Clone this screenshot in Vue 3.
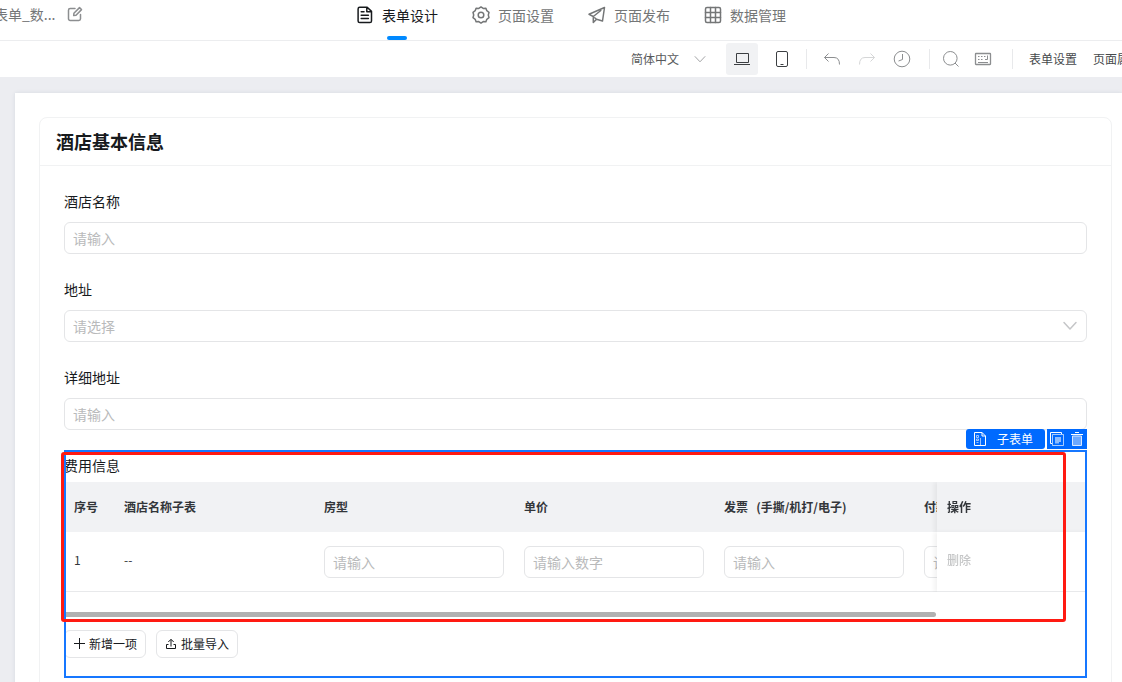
<script setup>
import { ref } from 'vue'

const tabs = [
  { id: 'design', label: '表单设计' },
  { id: 'settings', label: '页面设置' },
  { id: 'publish', label: '页面发布' },
  { id: 'data', label: '数据管理' },
]
const activeTab = ref('design')
const language = ref('zh')
const address = ref('')
const columns = [
  { key: 'room', title: '房型', hint: '请输入' },
  { key: 'price', title: '单价', hint: '请输入数字' },
  { key: 'invoice', title: '发票\u00a0\u00a0\u00a0(手撕/机打/电子)', hint: '请输入' },
  { key: 'pay', title: '付款', hint: '请输入' },
]
</script>

<template>
  <div class="designer">
    <header class="topbar">
      <div class="brand">
        <span class="brand-name">表单_数...</span>
        <button class="icon-btn" aria-label="重命名">
          <svg width="16" height="16" viewBox="0 0 16 16" class="line gray"><path d="M8 2.5H3.2a1.7 1.7 0 0 0-1.7 1.7v8.6a1.7 1.7 0 0 0 1.7 1.7h8.6a1.7 1.7 0 0 0 1.7-1.7V8.5M6.7 9.6l.2-2.4 5.6-5.6 2 2L9 9.2z" /></svg>
        </button>
      </div>
      <nav class="tabs">
        <button
          v-for="t in tabs"
          :key="t.id"
          class="tab"
          :class="{ active: activeTab === t.id }"
          @click="activeTab = t.id"
        >
          <svg v-if="t.id === 'design'" width="18" height="18" viewBox="0 0 18 18" class="line"><path d="M11.2 1.3H3.7A1.6 1.6 0 0 0 2.1 2.9v12a1.6 1.6 0 0 0 1.6 1.6h10.2a1.6 1.6 0 0 0 1.6-1.600V5.400zM10.800 1.600v4.100h4.400M5.200 5.800h2.800M5.200 9.200h7.200M5.200 12.600h7.200" /></svg>
          <svg v-else-if="t.id === 'settings'" width="18" height="18" viewBox="0 0 18 18" class="line"><path d="M9 .9l2.200 1.500 2.700-.2.900 2.500 2.200 1.600L16.300 9l.7 2.700-2.200 1.600-.9 2.500-2.700-.2L9 17.100l-2.200-1.500-2.700.2-.9-2.500L1 11.700 1.700 9 1 6.300l2.200-1.600.9-2.500 2.700.2z" /><circle cx="9" cy="9" r="2.800" /></svg>
          <svg v-else-if="t.id === 'publish'" width="18" height="18" viewBox="0 0 18 18" class="line"><path d="M16.500 1.500L1 8.300l4.300 2.200v6l3.200-3.200 6 1.700zM5.300 10.500l7.500-6M8.500 13.300l-1.800-1.600" /></svg>
          <svg v-else width="18" height="18" viewBox="0 0 18 18" class="line"><rect x="1.500" y="1.500" width="15" height="15" rx="1.500" /><path d="M6.500 1.500v15M11.500 1.500v15M1.500 6.500h15M1.500 11.500h15" /></svg>
          <span>{{ t.label }}</span>
        </button>
      </nav>
    </header>

    <div class="toolbar">
      <div class="select-box lang">
        <select v-model="language" aria-label="语言">
          <option value="zh">简体中文</option>
        </select>
        <svg width="12" height="12" viewBox="0 0 12 12" class="thin chevron"><path d="M.8 3.300L6 8.800l5.200-5.500" /></svg>
      </div>
      <div class="devices">
        <button class="device on" aria-label="电脑">
          <svg width="18" height="18" viewBox="0 0 18 18" class="thin dark"><path d="M3.500 3.500h12v9h-12zM1 14.500h16" /></svg>
        </button>
        <button class="device" aria-label="手机">
          <svg width="18" height="18" viewBox="0 0 18 18" class="thin dark"><rect x="3.500" y="1.500" width="11" height="15" rx="1.500" /><path d="M7.500 14.500h3" /></svg>
        </button>
      </div>
      <div class="group history">
        <button class="icon-btn" aria-label="撤销">
          <svg width="18" height="18" viewBox="0 0 18 18" class="thin gray"><path d="M5.500 3.500L1.500 7.500l4 4M1.500 7.500h9.500q5.500 0 5.500 7" /></svg>
        </button>
        <button class="icon-btn" aria-label="重做" disabled>
          <svg width="18" height="18" viewBox="0 0 18 18" class="thin faint"><path d="M12.500 3.500l4 4-4 4M16.500 7.500H7q-5.500 0-5.500 7" /></svg>
        </button>
        <button class="icon-btn" aria-label="历史">
          <svg width="18" height="18" viewBox="0 0 18 18" class="thin gray"><circle cx="9" cy="9" r="7.800" /><path d="M9.500 4v5.500L5.500 11" /></svg>
        </button>
      </div>
      <div class="group find">
        <button class="icon-btn" aria-label="搜索">
          <svg width="18" height="18" viewBox="0 0 18 18" class="thin gray"><circle cx="8.300" cy="8.300" r="6.800" /><path d="M13 13l3.500 3.500" /></svg>
        </button>
        <button class="icon-btn" aria-label="快捷键">
          <svg width="18" height="18" viewBox="0 0 18 18" class="thin gray"><rect x="1.500" y="3.500" width="15" height="11" rx=".5" stroke-width="1.300" /><path d="M4 6.500h8M4 9.500h6" stroke-dasharray="1.500 1.500" /><path d="M13.500 5.500v4H11M4 12.500h10" /></svg>
        </button>
      </div>
      <div class="group links">
        <button class="text-btn">表单设置</button>
        <button class="text-btn">页面属性</button>
      </div>
    </div>

    <main class="workspace">
      <div class="canvas">
        <section class="card">
          <h2 class="card-title">酒店基本信息</h2>
          <div class="card-body">
            <div class="field">
              <label for="hotel">酒店名称</label>
              <input id="hotel" type="text" class="control" placeholder="请输入" />
            </div>
            <div class="field">
              <label for="address">地址</label>
              <div class="select-box">
                <select id="address" v-model="address" class="control">
                  <option value="">请选择</option>
                </select>
                <svg width="16" height="16" viewBox="0 0 16 16" class="line chevron"><path d="M2 4.500l6 6.500 6-6.500" /></svg>
              </div>
            </div>
            <div class="field">
              <label for="detail">详细地址</label>
              <input id="detail" type="text" class="control" placeholder="请输入" />
            </div>

            <div class="subform">
              <h3 class="subform-title">费用信息</h3>
              <div class="table-wrap">
                <table>
                  <colgroup>
                    <col class="c-index" />
                    <col class="c-data" />
                    <col v-for="c in columns" :key="c.key" class="c-data" />
                    <col class="c-action" />
                  </colgroup>
                  <thead>
                    <tr>
                      <th>序号</th>
                      <th>酒店名称子表</th>
                      <th v-for="c in columns" :key="c.key">{{ c.title }}</th>
                      <th class="pinned">操作</th>
                    </tr>
                  </thead>
                  <tbody>
                    <tr>
                      <td class="text-cell">1</td>
                      <td class="text-cell">--</td>
                      <td v-for="c in columns" :key="c.key">
                        <input type="text" class="control" :placeholder="c.hint" :aria-label="c.title" />
                      </td>
                      <td class="text-cell pinned"><button class="delete" disabled>删除</button></td>
                    </tr>
                  </tbody>
                </table>
              </div>
              <div class="scrollbar"><div class="thumb"></div></div>
              <div class="actions">
                <button class="action">
                  <svg width="12" height="12" viewBox="0 0 12 12" class="thin"><path d="M6.500 0v11M1 5.500h11" /></svg>
                  <span>新增一项</span>
                </button>
                <button class="action">
                  <svg width="12" height="12" viewBox="0 0 12 12" class="thin"><path d="M6 8.500V1.500M3.300 4L6 1.300 8.700 4M3.500 6.500h-2v4h9v-4h-2" /></svg>
                  <span>批量导入</span>
                </button>
              </div>

              <div class="outline"></div>
              <div class="highlight"></div>
              <div class="badge">
                <span class="badge-name">
                  <svg width="14" height="14" viewBox="0 0 14 14" class="thin"><path d="M9 .5H1.500v13h11V4zM9 .5V4h3.500" /><path d="M3.500 3.500h2v2h-2zM3.500 7h2v1.500h-2zM3.500 10.500h2M7.500 6v7" opacity=".6" /></svg>
                  <span>子表单</span>
                </span>
                <span class="badge-tools">
                  <button class="icon-btn" aria-label="复制">
                    <svg width="14" height="14" viewBox="0 0 14 14" class="thin"><path d="M11.500 2V.5h-11v11H2" /><path d="M2.500 2.500h11v11h-11z" opacity=".65" /><path d="M5 5h6v5H9v1.500H5z" fill="currentColor" stroke="none" opacity=".55" /></svg>
                  </button>
                  <button class="icon-btn" aria-label="删除子表单">
                    <svg width="14" height="14" viewBox="0 0 14 14" class="thin"><path d="M1 2.500h12M5 .5h4" /><path d="M2.500 4h9v9.500h-9z" fill="currentColor" fill-opacity=".5" opacity=".85" /></svg>
                  </button>
                </span>
              </div>
            </div>
          </div>
        </section>
      </div>
    </main>
  </div>
</template>

<style>
body {
  margin: 0;
}
</style>

<style scoped>
.designer {
  height: 100vh;
  display: flex;
  flex-direction: column;
  overflow: hidden;
  background: #ecedf1;
  color: #171a1d;
  font-family: "Noto Sans CJK SC", "Liberation Sans", sans-serif;
  font-size: 14px;
  line-height: 22px;
}
.designer * {
  box-sizing: border-box;
}
button,
input,
select {
  font: inherit;
  color: inherit;
}
button {
  padding: 0;
  border: 0;
  background: none;
  white-space: nowrap;
}
svg {
  display: block;
  flex: none;
  fill: none;
  stroke: currentColor;
}
.line {
  stroke-width: 1.5;
  stroke-linejoin: round;
  stroke-linecap: round;
}
.thin {
  stroke-width: 1;
}
.gray {
  color: #8c8e90;
}
.dark {
  color: #3c3f42;
}
.faint {
  color: #d5d6d7;
}
.topbar {
  flex: none;
  display: grid;
  grid-template-columns: 1fr auto 1fr;
  padding-left: 20px;
  background: #fff;
  border-bottom: 1px solid #ecedef;
}
.brand {
  display: flex;
  align-items: center;
  gap: 11px;
  height: 28px;
  margin-left: -26px;
  color: #747677;
}
.tabs {
  display: flex;
  gap: 34px;
}
.tab {
  position: relative;
  display: flex;
  align-items: center;
  gap: 8px;
  height: 40px;
  padding-bottom: 11px;
  color: #747677;
}
.tab.active {
  color: #171a1d;
}
.tab.active::after {
  content: "";
  position: absolute;
  bottom: 0;
  left: 50%;
  width: 20px;
  height: 4px;
  margin-left: -10px;
  border-radius: 2px;
  background: #0089ff;
}
.toolbar {
  flex: none;
  display: flex;
  justify-content: flex-end;
  align-items: center;
  height: 36px;
  overflow: hidden;
  background: #fff;
  font-size: 12px;
}
.select-box {
  position: relative;
}
.select-box select {
  width: 100%;
  appearance: none;
  background: transparent;
}
.chevron {
  position: absolute;
  right: 9px;
  top: 8px;
  color: #c5c6c8;
  pointer-events: none;
}
.lang {
  width: 75px;
  margin-right: 20px;
  color: #585a5c;
}
.lang select {
  padding: 0;
  border: 0;
}
.lang .chevron {
  right: 0;
  top: 5px;
  color: #a2a3a5;
}
.devices {
  display: flex;
  gap: 8px;
  margin-right: 8px;
}
.device {
  display: grid;
  place-items: center;
  width: 32px;
  height: 32px;
  border-radius: 3px;
}
.device.on {
  background: #f1f2f4;
}
.group {
  display: flex;
  align-items: center;
  height: 20px;
  border-left: 1px solid #e8e9eb;
}
.history {
  gap: 17px;
  padding: 0 18px 0 16px;
}
.find {
  gap: 14px;
  padding: 0 20px 0 12px;
}
.links {
  flex: none;
  gap: 16px;
  margin-right: -19px;
  padding-left: 16px;
  color: #46494c;
}
.workspace {
  flex: 1;
  min-height: 0;
  overflow: hidden;
  padding: 16px 0 0 15px;
}
.canvas {
  padding: 24px 10px 24px 24px;
  background: #fff;
  box-shadow: 0 0 4px rgba(31, 56, 88, 0.1);
}
.card {
  border: 1px solid #f1f2f3;
  border-radius: 8px;
}
.card-title {
  margin: 0;
  padding: 11px 16px 12px;
  border-bottom: 1px solid #f1f2f3;
  font-size: 18px;
  font-weight: 700;
  line-height: 24px;
}
.card-body {
  display: flex;
  flex-direction: column;
  gap: 24px;
  padding: 24px;
}
.field {
  display: flex;
  flex-direction: column;
  gap: 10px;
}
.control {
  display: block;
  width: 100%;
  height: 32px;
  padding: 0 8px;
  border: 1px solid #e4e5e7;
  border-radius: 6px;
  background: #fff;
  font-size: 14px;
  color: #171a1d;
}
.control::placeholder,
select.control {
  color: #b9babb;
  opacity: 1;
}
.subform {
  position: relative;
  padding-bottom: 20px;
}
.subform-title {
  margin: 0 0 6px;
  font-size: 14px;
  font-weight: 400;
  line-height: 22px;
}
.table-wrap {
  overflow: hidden;
}
table {
  width: 1200px;
  table-layout: fixed;
  border-collapse: separate;
  border-spacing: 0;
  font-size: 12px;
  color: #33363a;
}
.c-index {
  width: 50px;
}
.c-data {
  width: 200px;
}
.c-action {
  width: 150px;
}
th {
  height: 50px;
  padding: 0 10px;
  background: #f1f2f4;
  text-align: left;
  font-weight: 700;
  white-space: nowrap;
}
td {
  height: 60px;
  padding: 0 10px;
  border-bottom: 1px solid #e8e9eb;
  background: #fff;
}
.text-cell {
  padding-bottom: 4px;
}
.pinned {
  position: sticky;
  right: 0;
  box-shadow: -3px 0 4px rgba(0, 0, 0, 0.05);
}
th.pinned {
  clip-path: inset(0 0 0 -6px);
}
.delete {
  color: #c5c6c7;
  font-weight: 500;
}
.scrollbar {
  margin: 20px 0 13px;
}
.thumb {
  width: 85.2%;
  height: 5px;
  border-radius: 3px;
  background: #b1b1b1;
}
.actions {
  display: flex;
  gap: 10px;
}
.action {
  display: flex;
  align-items: center;
  gap: 4px;
  height: 28px;
  padding: 0 8px;
  border: 1px solid #e4e5e7;
  border-radius: 6px;
  background: #fff;
  font-size: 12px;
}
.outline {
  position: absolute;
  inset: -4px 0 0;
  border: 2px solid #1677ff;
  pointer-events: none;
}
.highlight {
  position: absolute;
  inset: -2px 21px 56px -3px;
  border: 3px solid #ff1a12;
  border-radius: 3px;
  pointer-events: none;
}
.badge {
  position: absolute;
  right: 0;
  top: -25px;
  display: flex;
  gap: 2px;
  color: #fff;
  font-size: 12px;
}
.badge-name,
.badge-tools {
  display: flex;
  align-items: center;
  height: 20px;
  background: #006aff;
}
.badge-name {
  gap: 10px;
  padding: 0 12px 0 7px;
  border-radius: 3px;
}
.badge-tools {
  gap: 6px;
  padding: 0 3px;
}
</style>
